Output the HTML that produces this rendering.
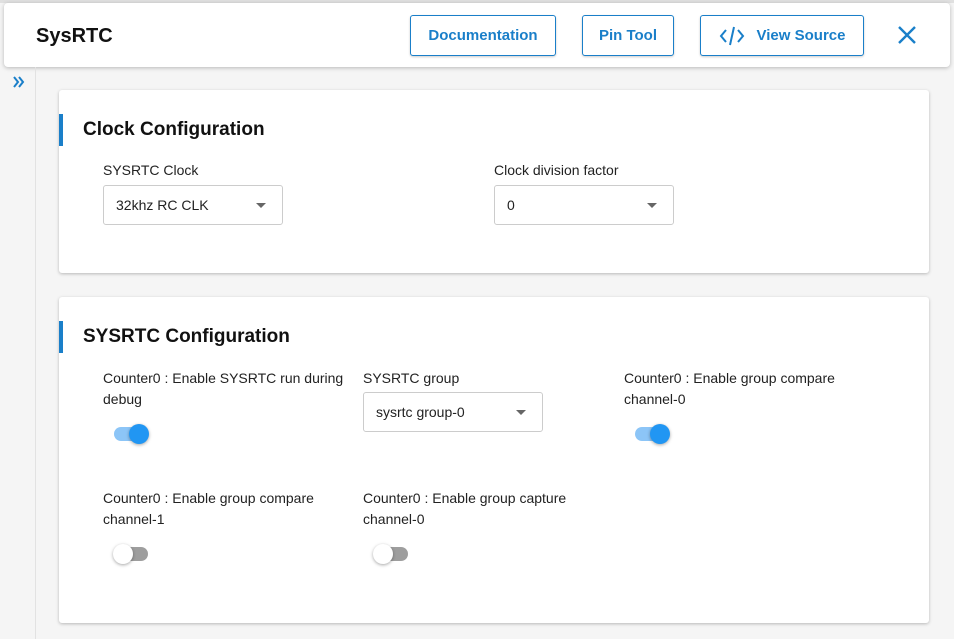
<!DOCTYPE html>
<html><head><meta charset="utf-8"><style>
*{box-sizing:border-box;margin:0;padding:0}
body{width:954px;height:639px;overflow:hidden;background:#f5f5f5;font-family:"Liberation Sans",Arial,sans-serif;color:#222;position:relative}
.abs{position:absolute}
.topline{left:0;top:0;width:954px;height:3px;background:#e0e0e0}
.header{left:4px;top:3px;width:946px;height:64px;background:#fff;border-radius:4px;box-shadow:0 1px 4px rgba(0,0,0,.25)}
.side{left:35px;top:67px;width:1px;height:572px;background:#e2e2e2}
.btn{position:absolute;top:12px;height:41px;border:1.5px solid #1a7fc9;border-radius:3px;color:#1a7fc9;font-size:15px;font-weight:bold;display:flex;align-items:center;justify-content:center;background:#fff;box-shadow:0 1px 2px rgba(0,0,0,.2)}
.card{position:absolute;left:59px;width:870px;background:#fff;border-radius:3px;box-shadow:0 1px 3px rgba(0,0,0,.25)}
.bar{position:absolute;left:0;width:4px;height:32px;background:#1a7fc9}
.title{position:absolute;left:24px;font-size:19px;font-weight:bold;color:#111}
.lbl{position:absolute;font-size:14px;line-height:21px;color:#222}
.sel{position:absolute;width:180px;height:40px;border:1px solid #ccc;border-radius:3px;font-size:14px;padding:11px 0 0 12px;color:#222}
.sel:after{content:"";position:absolute;right:16px;top:17px;border-left:5px solid transparent;border-right:5px solid transparent;border-top:5px solid #666}
.tg{position:absolute;width:34px;height:14px;border-radius:7px}
.tg i{position:absolute;top:-3px;width:20px;height:20px;border-radius:50%;box-shadow:0 1px 3px rgba(0,0,0,.35)}
.on{background:#8cc5f7}.on i{left:15px;background:#2196f3}
.off{background:#9e9e9e}.off i{left:-1px;background:#fff}
</style></head><body>
<div class="abs topline"></div>
<div class="abs header">
<div class="abs" style="left:32px;top:22px;font-size:20px;font-weight:bold;color:#111">SysRTC</div>
<div class="btn" style="left:406px;width:146px">Documentation</div>
<div class="btn" style="left:578px;width:92px">Pin Tool</div>
<div class="btn" style="left:696px;width:164px"><svg width="26" height="22" viewBox="0 0 26 22" style="margin-right:12px"><path d="M7 5 L2 11 L7 17 M19 5 L24 11 L19 17 M15 2 L11 20" stroke="#1a7fc9" stroke-width="2" fill="none"/></svg>View Source</div>
<svg class="abs" style="left:894px;top:23px" width="18" height="18" viewBox="0 0 18 18"><path d="M1 1L17 17M17 1L1 17" stroke="#1a7fc9" stroke-width="2.4"/></svg>
</div>
<div class="abs side"></div>
<svg class="abs" style="left:12px;top:75px" width="14" height="14" viewBox="0 0 14 14"><path d="M2 2L6 7L2 12M7 2L11 7L7 12" stroke="#1a7fc9" stroke-width="2" fill="none"/></svg>

<div class="card" style="top:90px;height:183px">
<div class="bar" style="top:24px"></div>
<div class="title" style="top:29px">Clock Configuration</div>
<div class="lbl" style="left:44px;top:70px">SYSRTC Clock</div>
<div class="sel" style="left:44px;top:95px">32khz RC CLK</div>
<div class="lbl" style="left:435px;top:70px">Clock division factor</div>
<div class="sel" style="left:435px;top:95px">0</div>
</div>

<div class="card" style="top:297px;height:326px">
<div class="bar" style="top:24px"></div>
<div class="title" style="top:29px">SYSRTC Configuration</div>
<div class="lbl" style="left:44px;top:71px">Counter0 : Enable SYSRTC run during<br>debug</div>
<div class="tg on" style="left:55px;top:130px"><i></i></div>
<div class="lbl" style="left:304px;top:71px">SYSRTC group</div>
<div class="sel" style="left:304px;top:95px">sysrtc group-0</div>
<div class="lbl" style="left:565px;top:71px">Counter0 : Enable group compare<br>channel-0</div>
<div class="tg on" style="left:576px;top:130px"><i></i></div>
<div class="lbl" style="left:44px;top:191px">Counter0 : Enable group compare<br>channel-1</div>
<div class="tg off" style="left:55px;top:250px"><i></i></div>
<div class="lbl" style="left:304px;top:191px">Counter0 : Enable group capture<br>channel-0</div>
<div class="tg off" style="left:315px;top:250px"><i></i></div>
</div>
</body></html>
